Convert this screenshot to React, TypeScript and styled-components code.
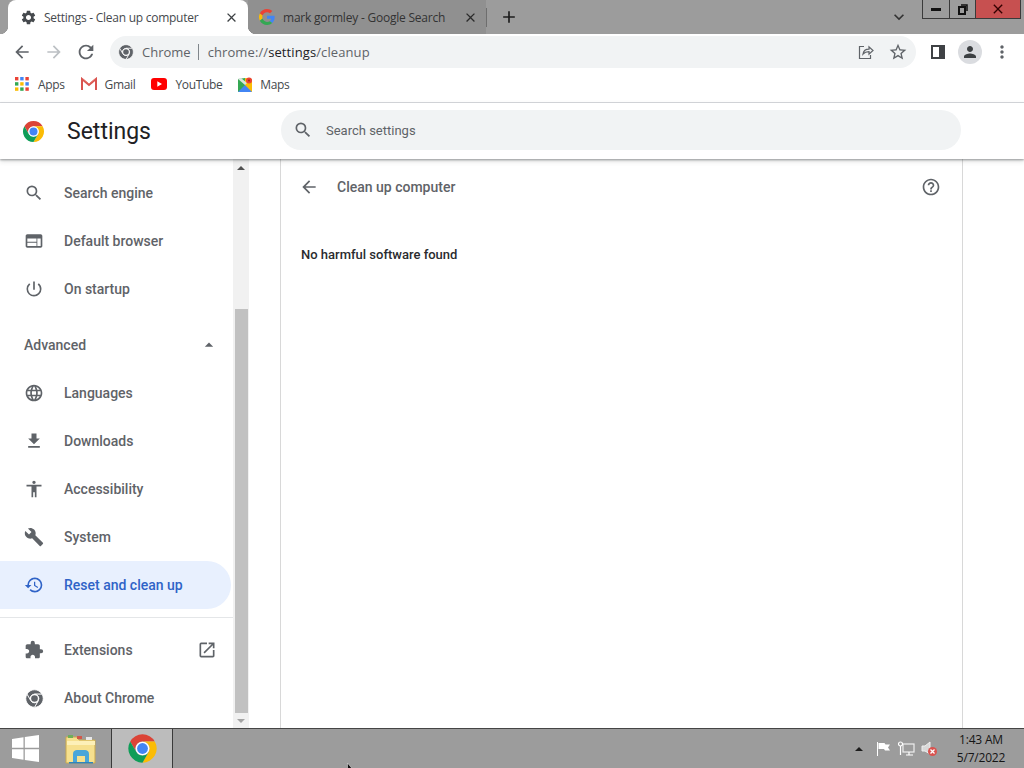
import * as React from "react";
import styled, { createGlobalStyle } from "styled-components";
import {
  MdAccessibility,
  MdAdd,
  MdArrowBack,
  MdArrowDropUp,
  MdArrowForward,
  MdBuild,
  MdClose,
  MdExtension,
  MdFileDownload,
  MdHelpOutline,
  MdHistory,
  MdKeyboardArrowDown,
  MdLanguage,
  MdMoreVert,
  MdOpenInNew,
  MdPerson,
  MdPowerSettingsNew,
  MdRefresh,
  MdSearch,
  MdSettings,
  MdStarBorder,
  MdWeb,
} from "react-icons/md";

const GlobalStyle = createGlobalStyle`
  html, body {
    margin: 0;
    padding: 0;
    overflow: hidden;
    background: #fff;
  }
`;

const uiFont = `"Open Sans", "Noto Sans", sans-serif`;
const pageFont = `Roboto, "Liberation Sans", sans-serif`;

const Screen = styled.div`
  position: relative;
  width: 1024px;
  height: 768px;
  display: flex;
  flex-direction: column;
  overflow: hidden;
  font-family: ${pageFont};
`;

/* ---------- browser tabs ---------- */

const TabStrip = styled.div`
  height: 34px;
  flex: none;
  display: flex;
  align-items: stretch;
  padding-left: 8px;
  background: #9c9c9c;
`;

const ActiveTab = styled.div`
  position: relative;
  width: 240px;
  display: flex;
  align-items: center;
  padding: 0 9px 0 12px;
  box-sizing: border-box;
  background: #fff;
  border-radius: 8px 8px 0 0;

  &::before,
  &::after {
    content: "";
    position: absolute;
    bottom: 0;
    width: 8px;
    height: 8px;
  }
  &::before {
    left: -8px;
    background: radial-gradient(circle at 0 0, transparent 8px, #fff 8.5px);
  }
  &::after {
    right: -8px;
    background: radial-gradient(circle at 100% 0, transparent 8px, #fff 8.5px);
  }
`;

const InactiveTab = styled.div`
  width: 238px;
  display: flex;
  align-items: center;
  padding: 0 8px 0 11px;
  box-sizing: border-box;
  background: #909090;
`;

const TabTitle = styled.span<{ $dim?: boolean }>`
  flex: 1;
  margin-left: ${(p) => (p.$dim ? "8px" : "7px")};
  font: 12px ${uiFont};
  letter-spacing: ${(p) => (p.$dim ? "-0.22px" : "-0.26px")};
  color: ${(p) => (p.$dim ? "#333" : "#45494d")};
  white-space: nowrap;
`;

const TabSeparator = styled.div`
  width: 1px;
  height: 19px;
  align-self: center;
  background: #6e6e6e;
`;

const NewTab = styled.div`
  width: 44px;
  display: flex;
  align-items: center;
  justify-content: center;
  color: #1d1d1d;
`;

const StripFill = styled.div`
  flex: 1;
  display: flex;
  justify-content: flex-end;
  align-items: center;
  padding-right: 13px;
  color: #333;
`;

const WindowControls = styled.div`
  height: 19px;
  display: flex;
  align-self: flex-start;
  margin-right: 3px;
  border: 1px solid #3a3a3a;
  border-top: 0;
  box-sizing: border-box;
`;

const WinButton = styled.div<{ $w: number; $bg?: string }>`
  width: ${(p) => p.$w}px;
  box-sizing: border-box;
  display: flex;
  align-items: center;
  justify-content: center;
  background: ${(p) => p.$bg ?? "transparent"};
  & + & {
    border-left: 1px solid #3a3a3a;
  }
`;

/* ---------- toolbar ---------- */

const Toolbar = styled.div`
  height: 36px;
  flex: none;
  display: flex;
  align-items: center;
  padding: 0 6px;
  background: #fff;
`;

const ToolButton = styled.div<{ $color?: string }>`
  width: 32px;
  height: 32px;
  flex: none;
  display: flex;
  align-items: center;
  justify-content: center;
  color: ${(p) => p.$color ?? "#5f6368"};
`;

const Omnibox = styled.div`
  flex: 1;
  height: 32px;
  margin: 0 6px 0 8px;
  padding: 0 2px 0 8px;
  display: flex;
  align-items: center;
  background: #f1f3f4;
  border-radius: 16px;
`;

const SiteChip = styled.span`
  margin-left: 8px;
  font: 13px ${uiFont};
  color: #5f6368;
`;

const ChipDivider = styled.span`
  width: 1px;
  height: 16px;
  margin: 0 9px 0 7px;
  background: #80868b;
`;

const Url = styled.span`
  flex: 1;
  font: 13px ${uiFont};
  letter-spacing: 0.1px;
  color: #5f6368;
  b {
    font-weight: 400;
    color: #202124;
  }
`;

const Avatar = styled.div`
  width: 24px;
  height: 24px;
  border-radius: 50%;
  background: #dadce0;
  display: flex;
  align-items: center;
  justify-content: center;
  color: #3c4043;
`;

/* ---------- bookmarks ---------- */

const BookmarkBar = styled.div`
  height: 33px;
  flex: none;
  display: flex;
  align-items: center;
  padding: 0 0 4px 15px;
  box-sizing: border-box;
  gap: 16px;
  background: #fff;
  border-bottom: 1px solid #dadce0;
`;

const Bookmark = styled.div`
  display: flex;
  align-items: center;
  gap: 8px;
  font: 12px ${uiFont};
  letter-spacing: -0.35px;
  color: #45494d;

  &:first-child {
    gap: 9px;
  }
`;

/* ---------- settings page ---------- */

const SettingsHeader = styled.header`
  position: relative;
  z-index: 2;
  height: 56px;
  flex: none;
  display: flex;
  align-items: center;
  padding-left: 22px;
  background: #fff;
  box-shadow: 0 1px 2px rgba(60, 64, 67, 0.45), 0 2px 5px rgba(60, 64, 67, 0.2);
`;

const HeaderBrand = styled.div`
  width: 259px;
  flex: none;
  display: flex;
  align-items: center;
  gap: 22px;
`;

const PageTitle = styled.h1`
  margin: 0;
  font: 400 23px ${pageFont};
  color: #202124;
`;

const SearchBox = styled.div`
  width: 680px;
  height: 40px;
  margin-bottom: 2px;
  display: flex;
  align-items: center;
  gap: 13px;
  padding-left: 12px;
  box-sizing: border-box;
  background: #f1f3f4;
  border-radius: 20px;
  color: #5f6368;
  font: 400 13px ${pageFont};
`;

const Body = styled.div`
  flex: 1;
  min-height: 0;
  display: flex;
  background: #fff;
`;

const Sidebar = styled.nav`
  width: 233px;
  flex: none;
  box-sizing: border-box;
  padding-top: 10px;
`;

const NavRow = styled.div<{ $active?: boolean }>`
  width: 231px;
  height: 48px;
  padding-left: 24px;
  padding-right: 14px;
  box-sizing: border-box;
  display: flex;
  align-items: center;
  font: 500 14px ${pageFont};
  color: ${(p) => (p.$active ? "#2f63c7" : "#5f6368")};
  background: ${(p) => (p.$active ? "#e8f0fe" : "transparent")};
  border-radius: 0 24px 24px 0;

  > svg:first-child {
    flex: none;
  }
`;

const NavLabel = styled.span`
  flex: 1;
  margin-left: 20px;
`;

const AdvancedRow = styled(NavRow)`
  margin-top: 8px;
  padding-right: 12px;
`;

const AdvancedLabel = styled.span`
  flex: 1;
`;

const NavIconSlot = styled.span`
  width: 20px;
  flex: none;
  display: flex;
  justify-content: center;
`;

const NavDivider = styled.div`
  height: 1px;
  margin: 8px 0;
  background: #e4e6e8;
`;

const Scrollbar = styled.div`
  width: 16px;
  flex: none;
  display: flex;
  flex-direction: column;
  align-items: center;
  background: #f1f1f1;
`;

const ScrollArrow = styled.div<{ $down?: boolean }>`
  width: 0;
  height: 0;
  flex: none;
  margin: ${(p) => (p.$down ? "6px 0 5px" : "7px 0 0")};
  border-left: 4px solid transparent;
  border-right: 4px solid transparent;
  border-bottom: ${(p) => (p.$down ? "0" : "4px solid #505050")};
  border-top: ${(p) => (p.$down ? "4px solid #a3a3a3" : "0")};
`;

const ScrollGap = styled.div`
  height: 139px;
  flex: none;
`;

const ScrollThumb = styled.div`
  width: 13px;
  flex: 1;
  background: #c1c1c1;
`;

const Main = styled.main`
  flex: 1;
  padding: 0 61px 0 31px;
  min-width: 0;
`;

const Card = styled.section`
  height: 100%;
  box-sizing: border-box;
  border-left: 1px solid #d8d8d8;
  border-right: 1px solid #d8d8d8;
  padding: 0 21px 0 20px;
`;

const SubHeader = styled.div`
  height: 56px;
  margin-left: -2px;
  display: flex;
  align-items: center;
  color: #5f6368;
`;

const SubTitle = styled.h2`
  flex: 1;
  margin: 0 0 0 18px;
  font: 500 14px ${pageFont};
  color: #5f6368;
`;

const Message = styled.p`
  margin: 32px 0 0;
  font: 500 13px ${pageFont};
  color: #2a2b2e;
`;

/* ---------- windows taskbar ---------- */

const Taskbar = styled.footer`
  height: 40px;
  flex: none;
  display: flex;
  align-items: stretch;
  box-sizing: border-box;
  background: #9c9c9c;
  border-top: 1px solid #454545;
`;

const TaskSlot = styled.div<{ $w: number; $on?: boolean }>`
  width: ${(p) => p.$w}px;
  flex: none;
  box-sizing: border-box;
  display: flex;
  align-items: center;
  justify-content: center;
  background: ${(p) => (p.$on ? "#bcbcbc" : "transparent")};
  border-left: ${(p) => (p.$on ? "1px solid #3a3a3a" : "0")};
  border-right: ${(p) => (p.$on ? "1px solid #3a3a3a" : "0")};
`;

const Tray = styled.div`
  flex: 1;
  display: flex;
  justify-content: flex-end;
  align-items: center;
  gap: 6px;
`;

const TrayUp = styled.div`
  width: 0;
  height: 0;
  margin-right: 6px;
  border-left: 4px solid transparent;
  border-right: 4px solid transparent;
  border-bottom: 4px solid #1c1c1c;
`;

const Clock = styled.div`
  width: 78px;
  margin-left: 1px;
  padding-right: 8px;
  box-sizing: border-box;
  text-align: center;
  font: 12px/18px ${uiFont};
  letter-spacing: -0.2px;
  color: #151515;
`;

const Cursor = styled.svg`
  position: absolute;
  left: 347px;
  top: 763px;
`;

/* ---------- drawn marks ---------- */

const ChromeMark = ({ size, mono }: { size: number; mono?: boolean }) => {
  const seam = mono ? { stroke: "#fff", strokeWidth: 2 } : {};
  return (
    <svg width={size} height={size} viewBox="0 0 48 48" style={{ flex: "none" }}>
      <path
        {...seam}
        fill={mono ? "#5f6368" : "#db4437"}
        d="M4.95 13A22 22 0 0 1 43.05 13H24A11 11 0 0 0 14.47 29.5Z"
      />
      <path
        {...seam}
        fill={mono ? "#5f6368" : "#fbbc05"}
        d="M43.05 13A22 22 0 0 1 24 46L33.53 29.5A11 11 0 0 0 24 13Z"
      />
      <path
        {...seam}
        fill={mono ? "#5f6368" : "#0f9d58"}
        d="M24 46A22 22 0 0 1 4.95 13L14.47 29.5A11 11 0 0 0 33.53 29.5Z"
      />
      <circle cx="24" cy="24" r="10.6" fill="#fff" />
      <circle cx="24" cy="24" r="8.4" fill={mono ? "#5f6368" : "#4285f4"} />
    </svg>
  );
};

const GoogleG = () => (
  <svg width="16" height="16" viewBox="0 0 48 48">
    <path fill="#ea4335" d="M24 9.5c3.5 0 6.7 1.2 9.2 3.6l6.9-6.9C35.9 2.4 30.4 0 24 0 14.6 0 6.5 5.4 2.6 13.2l8 6.2C12.4 13.7 17.7 9.5 24 9.5z" />
    <path fill="#4285f4" d="M47 24.6c0-1.6-.2-3.1-.4-4.6H24v9h13c-.6 3-2.2 5.5-4.7 7.2l7.3 5.7C44 37.8 47 31.8 47 24.6z" />
    <path fill="#fbbc05" d="M10.6 28.6A14.5 14.5 0 0 1 10.6 19.4l-8-6.2a24 24 0 0 0 0 21.6z" />
    <path fill="#34a853" d="M24 48c6.5 0 11.9-2.1 15.6-5.8l-7.3-5.7c-2 1.4-4.7 2.2-8.3 2.2-6.3 0-11.6-4.2-13.4-9.9l-8 6.2C6.5 42.6 14.6 48 24 48z" />
  </svg>
);

const AppsGrid = () => {
  const colors = ["#ea4335", "#4285f4", "#ea4335", "#34a853", "#fbbc05", "#4285f4", "#fbbc05", "#34a853", "#ea4335"];
  return (
    <svg width="14" height="14" viewBox="0 0 14 14">
      {colors.map((c, i) => (
        <rect key={i} x={(i % 3) * 5.2} y={Math.floor(i / 3) * 5.2} width="3.4" height="3.4" fill={c} />
      ))}
    </svg>
  );
};

const GmailMark = () => (
  <svg width="16" height="14" viewBox="0 0 16 14">
    <path d="M1 13V2l7 6 7-6v11" fill="none" stroke="#d9534f" strokeWidth="2" />
    <path d="M2 2l6 5 6-5" fill="none" stroke="#e8746a" strokeWidth="1" />
  </svg>
);

const YoutubeMark = () => (
  <svg width="16" height="12" viewBox="0 0 16 12">
    <rect width="16" height="12" rx="3" fill="#f00" />
    <path d="M6.3 3.3v5.4L11 6z" fill="#fff" />
  </svg>
);

const MapsMark = () => (
  <svg width="14" height="15" viewBox="0 0 14 15">
    <path d="M0 2l7-1v13l-7 1z" fill="#34a853" />
    <path d="M7 1l7 1v13l-7-1z" fill="#fbbc05" />
    <path d="M0 15l7-7 7 7z" fill="#4285f4" />
    <path d="M0 2l7 6 2-2-6-5z" fill="#d8e4dc" />
    <circle cx="11" cy="3.5" r="3" fill="#ea4335" />
    <circle cx="11" cy="3.5" r="1" fill="#a52714" />
  </svg>
);

const ShareIcon = () => (
  <svg width="16" height="16" viewBox="0 0 16 16" fill="none" stroke="#5f6368" strokeWidth="1.2">
    <path d="M6 2.5H1.5v12h11V11" />
    <path d="M5 10c.5-3 3-4.8 6-4.8V2.8l4 3.7-4 3.7V7.6c-2.5 0-4.5.7-6 2.4z" />
  </svg>
);

const SidePanelIcon = () => (
  <svg width="14" height="14" viewBox="0 0 14 14">
    <path fillRule="evenodd" fill="#3f4245" d="M0 0h14v14H0zM2 2v10h6V2z" />
  </svg>
);

const RestoreGlyph = () => (
  <svg width="10" height="11" viewBox="0 0 10 11" fill="none" stroke="#111" strokeWidth="1.5">
    <rect x="1" y="3" width="6" height="7" strokeWidth="2" />
    <path d="M3 1h6v6" />
  </svg>
);

const WindowsLogo = () => (
  <svg width="27" height="27" viewBox="0 0 27 27">
    <path fill="#fff" d="M0 4l11.5-1.7v10.5H0zM12.8 2.1L27 0v12.8H12.8zM0 14.2h11.5v10.5L0 23zM12.8 14.2H27V27l-14.2-2.1z" />
  </svg>
);

const ExplorerFolder = () => (
  <svg width="32" height="30" viewBox="0 0 32 30">
    <path d="M1 3h11l2 3h16v23H1z" fill="#f6e08e" stroke="#c9a94e" />
    <rect x="3" y="1" width="5" height="3" fill="#6fae5a" />
    <rect x="12" y="2" width="5" height="3" fill="#d2574a" />
    <rect x="21" y="3" width="6" height="3" fill="#e8e8e8" />
    <path d="M2 7h28v4H2z" fill="#fdf0b8" />
    <path d="M8 28v-8c0-3 2-4 4-4h8c2 0 4 1 4 4v8h-4v-6h-8v6z" fill="#49a6d9" />
    <path d="M4 28h24v1.5H4z" fill="#2f84bd" />
  </svg>
);

const FlagIcon = () => (
  <svg width="16" height="16" viewBox="0 0 16 16">
    <path d="M2 1h1v14H2z" fill="#fff" />
    <path d="M3.5 2h6l1 1.5H15l-2 3 2 3h-5l-1-1.500H3.500z" fill="#fff" />
  </svg>
);

const NetworkIcon = () => (
  <svg width="18" height="16" viewBox="0 0 18 16" fill="none" stroke="#fff" strokeWidth="1.2">
    <rect x="6" y="3" width="11" height="8" stroke="#eee" />
    <path d="M9 14h7M12 11v3" />
    <circle cx="3.5" cy="3" r="2" />
    <path d="M3.5 5v9" />
  </svg>
);

const SpeakerIcon = () => (
  <svg width="18" height="16" viewBox="0 0 18 16">
    <path d="M1 5h3l5-4v12L4 10H1z" fill="#d8d8d8" stroke="#efefef" />
    <circle cx="11.5" cy="10.5" r="4.5" fill="#d9534f" />
    <path d="M9.5 8.5l4 4m0-4l-4 4" stroke="#fff" strokeWidth="1.3" />
  </svg>
);

const navTop = [
  { icon: <MdSearch size={20} />, label: "Search engine" },
  { icon: <MdWeb size={20} />, label: "Default browser" },
  { icon: <MdPowerSettingsNew size={20} />, label: "On startup" },
];

const navAdvanced = [
  { icon: <MdLanguage size={20} />, label: "Languages" },
  { icon: <MdFileDownload size={20} />, label: "Downloads" },
  { icon: <MdAccessibility size={20} />, label: "Accessibility" },
  { icon: <MdBuild size={20} />, label: "System" },
];

function App() {
  return (
    <Screen>
      <GlobalStyle />

      <TabStrip>
        <ActiveTab>
          <MdSettings size={17} color="#45494d" />
          <TabTitle>Settings - Clean up computer</TabTitle>
          <MdClose size={15} color="#3c4043" />
        </ActiveTab>
        <InactiveTab>
          <GoogleG />
          <TabTitle $dim>mark gormley - Google Search</TabTitle>
          <MdClose size={15} color="#2b2b2b" />
        </InactiveTab>
        <TabSeparator />
        <NewTab>
          <MdAdd size={20} />
        </NewTab>
        <StripFill>
          <MdKeyboardArrowDown size={20} />
        </StripFill>
        <WindowControls>
          <WinButton $w={26}>
            <svg width="10" height="3" viewBox="0 0 10 3"><rect width="10" height="3" fill="#111" /></svg>
          </WinButton>
          <WinButton $w={26}>
            <RestoreGlyph />
          </WinButton>
          <WinButton $w={45} $bg="#c75050">
            <MdClose size={16} color="#300" />
          </WinButton>
        </WindowControls>
      </TabStrip>

      <Toolbar>
        <ToolButton>
          <MdArrowBack size={20} />
        </ToolButton>
        <ToolButton $color="#bcc0c4">
          <MdArrowForward size={20} />
        </ToolButton>
        <ToolButton>
          <MdRefresh size={22} />
        </ToolButton>
        <Omnibox>
          <ChromeMark size={16} mono />
          <SiteChip>Chrome</SiteChip>
          <ChipDivider />
          <Url>
            chrome://<b>settings</b>/cleanup
          </Url>
          <ToolButton>
            <ShareIcon />
          </ToolButton>
          <ToolButton>
            <MdStarBorder size={20} />
          </ToolButton>
        </Omnibox>
        <ToolButton>
          <SidePanelIcon />
        </ToolButton>
        <ToolButton>
          <Avatar>
            <MdPerson size={18} />
          </Avatar>
        </ToolButton>
        <ToolButton>
          <MdMoreVert size={20} />
        </ToolButton>
      </Toolbar>

      <BookmarkBar>
        <Bookmark>
          <AppsGrid />
          Apps
        </Bookmark>
        <Bookmark>
          <GmailMark />
          Gmail
        </Bookmark>
        <Bookmark>
          <YoutubeMark />
          YouTube
        </Bookmark>
        <Bookmark>
          <MapsMark />
          Maps
        </Bookmark>
      </BookmarkBar>

      <SettingsHeader>
        <HeaderBrand>
          <ChromeMark size={23} />
          <PageTitle>Settings</PageTitle>
        </HeaderBrand>
        <SearchBox>
          <MdSearch size={20} />
          Search settings
        </SearchBox>
      </SettingsHeader>

      <Body>
        <Sidebar>
          {navTop.map((item) => (
            <NavRow key={item.label}>
              {item.icon}
              <NavLabel>{item.label}</NavLabel>
            </NavRow>
          ))}
          <AdvancedRow>
            <AdvancedLabel>Advanced</AdvancedLabel>
            <MdArrowDropUp size={20} />
          </AdvancedRow>
          {navAdvanced.map((item) => (
            <NavRow key={item.label}>
              {item.icon}
              <NavLabel>{item.label}</NavLabel>
            </NavRow>
          ))}
          <NavRow $active>
            <MdHistory size={20} />
            <NavLabel>Reset and clean up</NavLabel>
          </NavRow>
          <NavDivider />
          <NavRow>
            <MdExtension size={20} />
            <NavLabel>Extensions</NavLabel>
            <MdOpenInNew size={20} />
          </NavRow>
          <NavRow>
            <NavIconSlot>
              <ChromeMark size={19} mono />
            </NavIconSlot>
            <NavLabel>About Chrome</NavLabel>
          </NavRow>
        </Sidebar>

        <Scrollbar>
          <ScrollArrow />
          <ScrollGap />
          <ScrollThumb />
          <ScrollArrow $down />
        </Scrollbar>

        <Main>
          <Card>
            <SubHeader>
              <MdArrowBack size={20} />
              <SubTitle>Clean up computer</SubTitle>
              <MdHelpOutline size={20} />
            </SubHeader>
            <Message>No harmful software found</Message>
          </Card>
        </Main>
      </Body>

      <Taskbar>
        <TaskSlot $w={50}>
          <WindowsLogo />
        </TaskSlot>
        <TaskSlot $w={61}>
          <ExplorerFolder />
        </TaskSlot>
        <TaskSlot $w={62} $on>
          <ChromeMark size={31} />
        </TaskSlot>
        <Tray>
          <TrayUp />
          <FlagIcon />
          <NetworkIcon />
          <SpeakerIcon />
          <Clock>
            1:43 AM
            <br />
            5/7/2022
          </Clock>
        </Tray>
      </Taskbar>

      <Cursor width="8" height="6" viewBox="0 0 8 6">
        <path d="M0.5 0v6h5z" fill="#111" stroke="#eee" strokeWidth="0.5" />
      </Cursor>
    </Screen>
  );
}

export default App;
